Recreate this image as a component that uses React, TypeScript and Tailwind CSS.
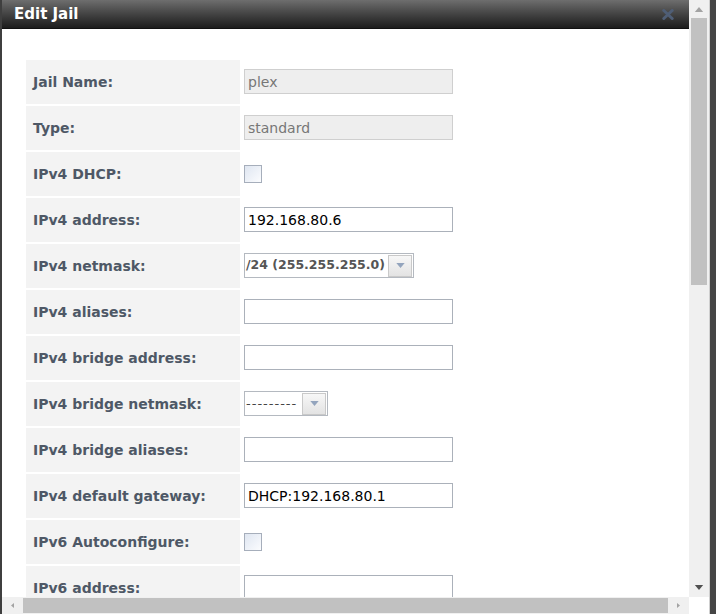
import type { ReactNode } from 'react';

type Field =
  | { label: string; kind: 'text'; value?: string; disabled?: boolean }
  | { label: string; kind: 'check' }
  | { label: string; kind: 'select'; value: string; width: string; bold?: boolean };

const fields: Field[] = [
  { label: 'Jail Name:', kind: 'text', value: 'plex', disabled: true },
  { label: 'Type:', kind: 'text', value: 'standard', disabled: true },
  { label: 'IPv4 DHCP:', kind: 'check' },
  { label: 'IPv4 address:', kind: 'text', value: '192.168.80.6' },
  { label: 'IPv4 netmask:', kind: 'select', value: '/24 (255.255.255.0)', width: 'w-[170px]', bold: true },
  { label: 'IPv4 aliases:', kind: 'text' },
  { label: 'IPv4 bridge address:', kind: 'text' },
  { label: 'IPv4 bridge netmask:', kind: 'select', value: '---------', width: 'w-[84px]' },
  { label: 'IPv4 bridge aliases:', kind: 'text' },
  { label: 'IPv4 default gateway:', kind: 'text', value: 'DHCP:192.168.80.1' },
  { label: 'IPv6 Autoconfigure:', kind: 'check' },
  { label: 'IPv6 address:', kind: 'text' },
];

const Caret = ({ className }: { className: string }) => (
  <svg width="10" height="6" viewBox="0 0 10 6" className={className}>
    <path d="M0 0h10L5 6z" fill="currentColor" />
  </svg>
);

const Control = ({ field }: { field: Field }): ReactNode => {
  if (field.kind === 'check') {
    return (
      <div className="mt-[13px] h-[18px] w-[18px] border border-[#a6aebb] bg-gradient-to-br from-[#dfe6f1] to-[#fbfcfe]" />
    );
  }
  if (field.kind === 'select') {
    return (
      <div className={`mt-[9px] flex h-[25px] items-center border border-[#b4b9c0] bg-white ${field.width}`}>
        <span
          className={`flex-1 pl-[1px] leading-none ${
            field.bold
              ? 'text-[12.5px] font-bold text-[#555]'
              : 'text-[13px] tracking-[1px] text-[#444]'
          }`}
        >
          {field.value}
        </span>
        <div className="mr-[1px] flex h-[22px] w-[24px] items-center justify-center border border-[#c9c9c9] bg-gradient-to-b from-[#f7f7f7] to-[#e3e3e3]">
          <Caret className="h-[5px] w-[9px] text-[#93a4bd]" />
        </div>
      </div>
    );
  }
  return (
    <div
      className={`mt-[9px] flex h-[25px] w-[209px] items-center border px-[3px] text-[14px] leading-none ${
        field.disabled
          ? 'border-[#cfcfcf] bg-[#eeeeee] text-[#777]'
          : 'border-[#abb1ba] bg-white text-black'
      }`}
    >
      {field.value}
    </div>
  );
};

export default function App() {
  return (
    <div className="flex h-[614px] w-[716px] overflow-hidden bg-white font-['DejaVu_Sans',sans-serif]">
      <div className="w-[2px] bg-[#3f3f3f]" />
      <div className="flex w-[707px] flex-col">
        <div className="flex h-[597px]">
          {/* dialog content */}
          <div className="flex w-[687px] flex-col overflow-hidden">
            <div className="flex h-[29px] shrink-0 items-center justify-between border-b border-[#111] bg-gradient-to-b from-[#6e6e6e] to-[#1d1d1d] pl-[12px] pr-[15px]">
              <span className="text-[15px] font-bold text-white">Edit Jail</span>
              <svg width="12" height="11" viewBox="0 0 12 11">
                <path
                  d="M1.8 1.5l8.4 8M10.2 1.5l-8.4 8"
                  stroke="#4f5e76"
                  strokeWidth="3"
                  strokeLinecap="round"
                />
              </svg>
            </div>
            <div className="mt-[31px] flex flex-col gap-[2px] pl-[24px]">
              {fields.map((f) => (
                <div key={f.label} className="flex h-[44px] shrink-0 gap-[2px]">
                  <div className="flex w-[214px] items-center bg-[#f3f3f3] pl-[7px] text-[14px] font-bold text-[#4e5866]">
                    {f.label}
                  </div>
                  <div className="flex items-start pl-[2px]">
                    <Control field={f} />
                  </div>
                </div>
              ))}
            </div>
          </div>
          {/* vertical scrollbar */}
          <div className="flex w-[20px] flex-col items-center bg-[#f0f0f0]">
            <div className="flex h-[18px] items-center justify-center">
              <Caret className="h-[5px] w-[10px] rotate-180 text-[#a3a3a3]" />
            </div>
            <div className="h-[267px] w-[16px] bg-[#c1c1c1]" />
            <div className="flex-1" />
            <div className="flex h-[20px] items-center justify-center">
              <Caret className="h-[5px] w-[10px] text-[#505050]" />
            </div>
          </div>
        </div>
        <div className="flex h-[17px]">
          <div className="flex w-[687px] items-center bg-[#f0f0f0]">
            <div className="flex w-[21px] justify-center">
              <Caret className="h-[9px] w-[5px] rotate-90 text-[#a3a3a3]" />
            </div>
            <div className="h-[15px] w-[645px] bg-[#c1c1c1]" />
            <div className="flex flex-1 justify-center">
              <Caret className="h-[9px] w-[5px] -rotate-90 text-[#a3a3a3]" />
            </div>
          </div>
          <div className="flex-1 bg-white" />
        </div>
      </div>
      <div className="w-[7px] border-l border-[#cfcfcf] bg-[#454545]" />
    </div>
  );
}
